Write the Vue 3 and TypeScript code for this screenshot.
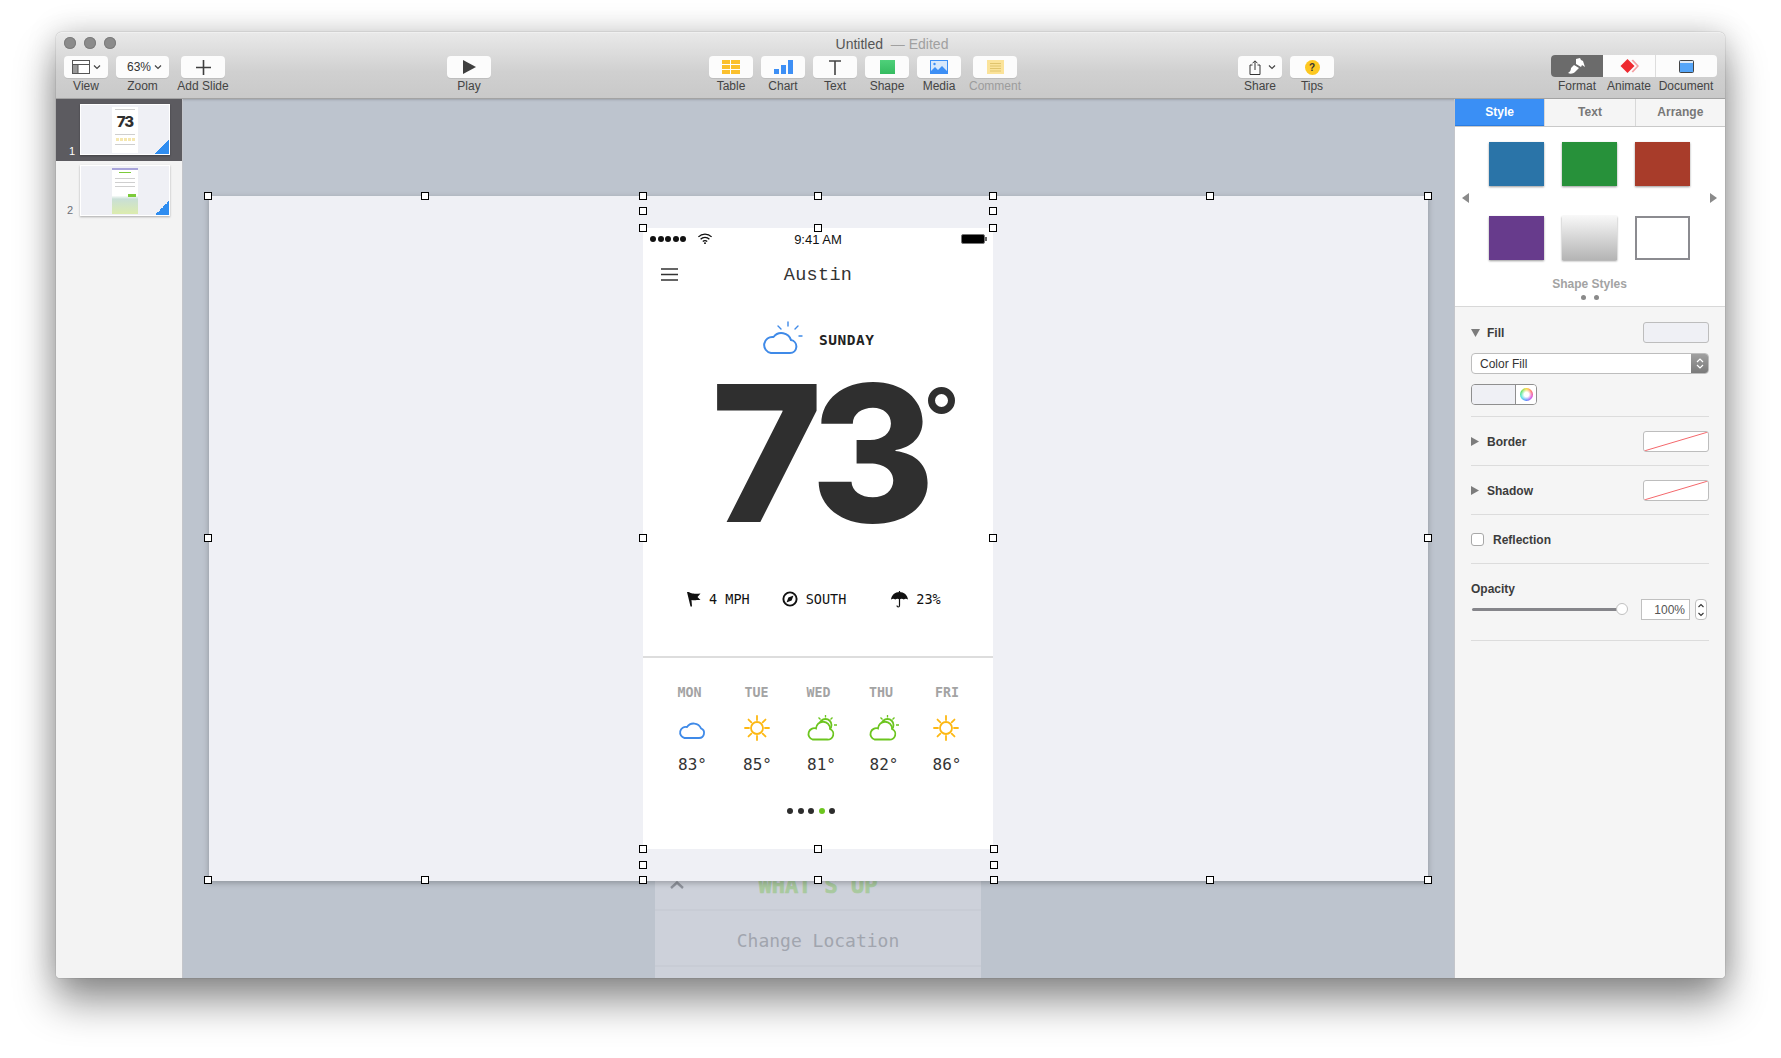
<script setup lang="ts">
type Tool = { label: string; icon: string; width: number; dim?: boolean };
type Day = { name: string; temp: string; icon: "cloud" | "sun" | "partly"; nudge: number; iconNudge: number };

const leftTools: Tool[] = [
  { label: "View", icon: "view", width: 44 },
  { label: "Zoom", icon: "zoom", width: 53 },
  { label: "Add Slide", icon: "add", width: 44 },
];
const insertTools: Tool[] = [
  { label: "Table", icon: "table", width: 44 },
  { label: "Chart", icon: "chart", width: 44 },
  { label: "Text", icon: "text", width: 44 },
  { label: "Shape", icon: "shape", width: 44 },
  { label: "Media", icon: "media", width: 44 },
  { label: "Comment", icon: "comment", width: 44, dim: true },
];
const shareTools: Tool[] = [
  { label: "Share", icon: "share", width: 44 },
  { label: "Tips", icon: "tips", width: 44 },
];

const swatches = ["blue", "green", "red", "purple", "silver", "outline"];

const days: Day[] = [
  { name: "MON", temp: "83°", icon: "cloud", nudge: -3, iconNudge: -1 },
  { name: "TUE", temp: "85°", icon: "sun", nudge: -1, iconNudge: -1 },
  { name: "WED", temp: "81°", icon: "partly", nudge: -3, iconNudge: 0 },
  { name: "THU", temp: "82°", icon: "partly", nudge: -3, iconNudge: 0 },
  { name: "FRI", temp: "86°", icon: "sun", nudge: 0, iconNudge: -1 },
];

// selection handles, x and y from the slide's top left handle
const handles: [number, number][] = [
  [0, 0], [217, 0], [435, 0], [610, 0], [785, 0], [1002, 0], [1220, 0],
  [435, 15], [785, 15], [435, 32], [610, 32], [785, 32],
  [0, 342], [435, 342], [785, 342], [1220, 342],
  [435, 653], [610, 653], [786, 653], [435, 669], [786, 669],
  [0, 684], [217, 684], [435, 684], [610, 684], [786, 684], [1002, 684], [1220, 684],
];

const sunRays = [0, 45, 90, 135, 180, 225, 270, 315];
</script>

<template>
  <div class="window">
    <header class="toolbar">
      <div class="titlebar">
        <div class="lights"><i></i><i></i><i></i></div>
        <div class="title">Untitled <span class="edited">&nbsp;— Edited</span></div>
      </div>
      <div class="tools">
        <div class="group left-group">
          <div v-for="t in leftTools" :key="t.label" class="tool">
            <div class="btn" :style="{ width: t.width + 'px' }">
              <template v-if="t.icon === 'view'">
                <svg width="18" height="14" viewBox="0 0 18 14"><rect x=".5" y=".5" width="17" height="13" fill="#fff" stroke="#555"/><rect x="1" y="5" width="5" height="8" fill="#999"/><path d="M1 4.500h16M6 5v8" stroke="#555" fill="none"/></svg>
                <svg class="chev" width="8" height="6" viewBox="0 0 8 6"><path d="M1 1.500l3 3 3-3" fill="none" stroke="#444" stroke-width="1.200"/></svg>
              </template>
              <template v-else-if="t.icon === 'zoom'">
                <span class="zoomval">63%</span>
                <svg class="chev" width="8" height="6" viewBox="0 0 8 6"><path d="M1 1.500l3 3 3-3" fill="none" stroke="#444" stroke-width="1.200"/></svg>
              </template>
              <svg v-else width="15" height="15" viewBox="0 0 15 15"><path d="M7.500 0v15M0 7.500h15" stroke="#3f3f3f" stroke-width="1.600"/></svg>
            </div>
            <span class="tool-label">{{ t.label }}</span>
          </div>
        </div>

        <div class="tool play">
          <div class="btn"><svg width="14" height="14" viewBox="0 0 14 14"><path d="M1 0l13 7-13 7z" fill="#3f3f3f"/></svg></div>
          <span class="tool-label">Play</span>
        </div>

        <div class="group insert-group">
          <div v-for="t in insertTools" :key="t.label" class="tool" :class="{ dim: t.dim }">
            <div class="btn">
              <svg v-if="t.icon === 'table'" width="18" height="14" viewBox="0 0 18 14"><rect width="18" height="14" fill="#fbc02d"/><path d="M0 4.500h18M0 9.500h18M8.500 0v14" stroke="#fff"/></svg>
              <svg v-else-if="t.icon === 'chart'" width="19" height="14" viewBox="0 0 19 14"><rect y="9" width="5" height="5" fill="#3d8ff5"/><rect x="7" y="5" width="5" height="9" fill="#3d8ff5"/><rect x="14" width="5" height="14" fill="#3d8ff5"/></svg>
              <svg v-else-if="t.icon === 'text'" width="12" height="15" viewBox="0 0 12 15"><path d="M0 1h12M6 1v14" stroke="#444" stroke-width="1.600" fill="none"/></svg>
              <svg v-else-if="t.icon === 'shape'" width="15" height="14" viewBox="0 0 15 14"><defs><linearGradient id="sh" x1="0" y1="0" x2="0" y2="1"><stop offset="0" stop-color="#4fd07a"/><stop offset="1" stop-color="#35bb60"/></linearGradient></defs><rect width="15" height="14" fill="url(#sh)"/></svg>
              <svg v-else-if="t.icon === 'media'" width="18" height="14" viewBox="0 0 18 14"><rect x=".5" y=".5" width="17" height="13" fill="#d8e8fb" stroke="#3d8ff5"/><circle cx="4.500" cy="4" r="1.200" fill="#3d8ff5"/><path d="M1 11l4-4 3 3 4-4 5 5v2H1z" fill="#3d8ff5"/></svg>
              <svg v-else width="17" height="14" viewBox="0 0 17 14"><rect width="17" height="14" fill="#fbe39a"/><path d="M3 3.500h11M3 6h11M3 8.500h11M3 11h11" stroke="#d9bc62" stroke-width=".8"/></svg>
            </div>
            <span class="tool-label">{{ t.label }}</span>
          </div>
        </div>

        <div class="group share-group">
          <div v-for="t in shareTools" :key="t.label" class="tool">
            <div class="btn">
              <template v-if="t.icon === 'share'">
                <svg class="share-icon" width="12" height="15" viewBox="0 0 12 15"><path d="M3.500 5H1v9.500h10V5H8.500M6 10V1M3.500 3.300L6 .8l2.500 2.500" fill="none" stroke="#333"/></svg>
                <svg class="chev wide" width="8" height="6" viewBox="0 0 8 6"><path d="M1 1.500l3 3 3-3" fill="none" stroke="#444" stroke-width="1.200"/></svg>
              </template>
              <span v-else class="tip">?</span>
            </div>
            <span class="tool-label">{{ t.label }}</span>
          </div>
        </div>

        <div class="inspector-group">
          <div class="seg">
            <div class="seg-btn active">
              <svg width="18" height="16" viewBox="0 0 18 16"><path d="M8 1l4-1 1 2 2 1 2 6-3-2-1 2-5-3zM6 7l5 3-4 4c-2 2-5 2-7 1 2-1 3-3 3-5z" fill="#fff"/></svg>
            </div>
            <div class="seg-btn">
              <svg width="19" height="14" viewBox="0 0 19 14"><path d="M11.500 1.500L17 7l-5.500 5.500 1.500 1L19 7l-6-6.500z" fill="#f4a0a2"/><path d="M7.500 0l7 7-7 7-7-7z" fill="#ee2a30"/></svg>
            </div>
            <div class="seg-btn">
              <svg width="15" height="13" viewBox="0 0 15 13"><rect x=".5" y=".5" width="14" height="12" rx="1" fill="#55a5f8" stroke="#444"/><rect x="1" y="1" width="13" height="2" fill="#dfe9f5"/></svg>
            </div>
          </div>
          <div class="seg-labels"><span>Format</span><span>Animate</span><span>Document</span></div>
        </div>
      </div>
    </header>

    <div class="body">
      <aside class="sidebar">
        <div class="thumb-row selected">
          <span class="num">1</span>
          <div class="thumb">
            <div class="mini-phone">
              <div class="mini-line top"></div>
              <b class="mini-73">73</b>
              <div class="mini-line first"></div>
              <div class="mini-colors"><i></i><i></i><i></i><i></i><i></i></div>
              <div class="mini-line"></div>
            </div>
            <i class="corner"></i>
          </div>
        </div>
        <div class="thumb-row">
          <span class="num">2</span>
          <div class="thumb">
            <div class="mini-phone second">
              <div class="mini-green"></div>
              <div class="mini-line first"></div>
              <div class="mini-line"></div>
              <div class="mini-line"></div>
              <div class="mini-btn"></div>
            </div>
            <i class="corner"></i>
          </div>
        </div>
      </aside>

      <main class="canvas">
        <div class="slide">
          <div class="phone">
            <div class="status">
              <div class="signal"><i></i><i></i><i></i><i></i><i></i></div>
              <svg class="wifi" width="16" height="11" viewBox="0 0 14 10"><path d="M1 3.500a8.500 8.500 0 0 1 12 0M3 5.700a5.600 5.600 0 0 1 8 0M5 7.800a2.800 2.800 0 0 1 4 0" fill="none" stroke="#111" stroke-width="1.200"/><circle cx="7" cy="9.200" r=".9" fill="#111"/></svg>
              <span class="clock">9:41 AM</span>
              <div class="battery"><i></i></div>
            </div>
            <div class="nav">
              <svg class="menu" width="17" height="13" viewBox="0 0 17 13"><path d="M0 1h17M0 6.500h17M0 12h17" stroke="#333" stroke-width="1.500"/></svg>
              <span class="city">Austin</span>
            </div>
            <div class="today">
              <svg width="40" height="33" viewBox="0 0 40 33" fill="none" stroke="#3f8ae8" stroke-width="2" stroke-linecap="round" stroke-linejoin="round">
                <path d="M8 32h19a6.500 6.500 0 0 0 1-12.900A10 10 0 0 0 10.500 16 8 8 0 0 0 8 32z"/>
                <path d="M25 1v4M15 5l3 3M35 5l-3 3M36 15h3" stroke-width="1.400"/>
              </svg>
              <span class="day-name">SUNDAY</span>
            </div>
            <div class="hero">
              <span class="big">73</span>
              <i class="ring"></i>
            </div>
            <div class="stats">
              <div class="stat wind">
                <svg width="14" height="16" viewBox="0 0 14 16"><path d="M0 1l1.500 0c3 1.200 4 2.200 12 1.500l-3 3.500 3 3c-4.500 0-6 .5-9 0L5 15.500 3.500 15.500z" fill="#111"/></svg>
                <span>4 MPH</span>
              </div>
              <div class="stat dir">
                <svg width="16" height="16" viewBox="0 0 15 15"><circle cx="7.500" cy="7.500" r="6.200" fill="none" stroke="#111" stroke-width="1.800"/><path d="M10.800 4.200L9 9 4.200 10.800 6 6z" fill="#111"/></svg>
                <span>SOUTH</span>
              </div>
              <div class="stat rain">
                <svg width="17" height="17" viewBox="0 0 17 17"><path d="M0 8.500C.5 4 4 1 8.500 1S16.500 4 17 8.500c-1.500-1-3-1-4.200 0-1.300-1-3-1-4.300 0-1.300-1-3-1-4.300 0C3 7.500 1.500 7.500 0 8.500z" fill="#111"/><path d="M8.500 0v1M8.500 8v6.500c0 2-2.500 2-2.500 0" fill="none" stroke="#111" stroke-width="1.200"/></svg>
                <span>23%</span>
              </div>
            </div>
            <div class="forecast">
              <div v-for="d in days" :key="d.name" class="fday">
                <span class="fname" :style="{ transform: `translateX(${d.nudge}px)` }">{{ d.name }}</span>
                <div class="ficon" :style="{ transform: `translateX(${d.iconNudge}px)` }">
                  <svg v-if="d.icon === 'cloud'" width="30" height="26" viewBox="0 0 30 26" fill="none" stroke="#3f8ae8" stroke-width="1.800">
                    <path d="M7.500 23H22a5 5 0 0 0 2-9.600A8 8 0 0 0 10 12a5.500 5.500 0 0 0-2.500 11z" />
                  </svg>
                  <svg v-else-if="d.icon === 'sun'" width="26" height="26" viewBox="0 0 26 26" fill="none" stroke="#fdb813" stroke-width="1.800">
                    <circle cx="13" cy="13" r="6" />
                    <path v-for="r in sunRays" :key="r" d="M13 1v4" :transform="`rotate(${r} 13 13)`" stroke-linecap="round" />
                  </svg>
                  <svg v-else width="32" height="26" viewBox="0 0 32 26" fill="none" stroke="#6cc51f" stroke-width="1.800">
                    <circle cx="19.500" cy="10" r="6" />
                    <path d="M19.500 0v2.500M12.500 2.500l2 2M26.500 2.500l-2 2M28 10h3" stroke-width="1.300" />
                    <path d="M6.500 24.500H21a5.500 5.500 0 0 0 3-10.500 7 7 0 0 0-14-.5 5.500 5.500 0 0 0-3.500 11z" fill="#fff" />
                  </svg>
                </div>
                <span class="ftemp">{{ d.temp }}</span>
              </div>
            </div>
            <div class="pager"><i></i><i></i><i></i><i class="on"></i><i></i></div>
          </div>
          <i
            v-for="(h, idx) in handles"
            :key="idx"
            class="handle"
            :style="{ left: h[0] - 5 + 'px', top: h[1] - 4 + 'px' }"
          ></i>
        </div>

        <div class="sheet">
          <div class="sheet-head">
            <svg class="caret" width="14" height="8" viewBox="0 0 14 8"><path d="M1 7l6-5.500L13 7" fill="none" stroke="#8e929b" stroke-width="2.400"/></svg>
            <span class="whats">WHAT'S UP</span>
          </div>
          <div class="sheet-row">Change Location</div>
          <div class="sheet-row"></div>
        </div>
      </main>

      <aside class="panel">
        <div class="tabs">
          <div class="tab on">Style</div>
          <div class="tab">Text</div>
          <div class="tab">Arrange</div>
        </div>
        <section class="styles">
          <svg class="arrow" width="7" height="10" viewBox="0 0 7 10"><path d="M7 0v10L0 5z" fill="#8a8a8a"/></svg>
          <div class="swatches">
            <div v-for="s in swatches" :key="s" class="swatch" :class="s"></div>
          </div>
          <svg class="arrow" width="7" height="10" viewBox="0 0 7 10"><path d="M0 0v10l7-5z" fill="#8a8a8a"/></svg>
          <div class="styles-label">Shape Styles</div>
          <div class="styles-dots"><i></i><i></i></div>
        </section>

        <section class="props">
          <div class="prop fill">
            <div class="prop-row">
              <svg class="tri" width="9" height="8" viewBox="0 0 9 8"><path d="M0 0h9L4.500 8z" fill="#7c7c7c"/></svg>
              <span class="prop-name">Fill</span>
              <div class="well tint"></div>
            </div>
            <div class="select">
              <span>Color Fill</span>
              <div class="select-cap">
                <svg width="8" height="13" viewBox="0 0 8 13"><path d="M1 5l3-3 3 3M1 8l3 3 3-3" fill="none" stroke="#fff" stroke-width="1.200"/></svg>
              </div>
            </div>
            <div class="colorpick">
              <div class="colorpick-well"></div>
              <div class="colorpick-wheel"><i></i></div>
            </div>
          </div>
          <div class="prop row">
            <svg class="tri" width="8" height="9" viewBox="0 0 8 9"><path d="M0 0v9l8-4.500z" fill="#7c7c7c"/></svg>
            <span class="prop-name">Border</span>
            <div class="well none"><svg width="64" height="19" viewBox="0 0 64 19"><path d="M0 19L64 0" stroke="#f4686c" stroke-width="1"/></svg></div>
          </div>
          <div class="prop row">
            <svg class="tri" width="8" height="9" viewBox="0 0 8 9"><path d="M0 0v9l8-4.500z" fill="#7c7c7c"/></svg>
            <span class="prop-name">Shadow</span>
            <div class="well none"><svg width="64" height="19" viewBox="0 0 64 19"><path d="M0 19L64 0" stroke="#f4686c" stroke-width="1"/></svg></div>
          </div>
          <div class="prop row">
            <i class="check"></i>
            <span class="prop-name refl">Reflection</span>
          </div>
          <div class="prop opacity">
            <div class="prop-name">Opacity</div>
            <div class="opacity-row">
              <div class="slider"><i></i></div>
              <div class="pct">100%</div>
              <div class="stepper">
                <svg width="8" height="16" viewBox="0 0 8 16"><path d="M1.500 5L4 2.500 6.500 5M1.500 11L4 13.500 6.500 11" fill="none" stroke="#333" stroke-width="1.100"/></svg>
              </div>
            </div>
          </div>
        </section>
      </aside>
    </div>
  </div>
</template>

<style>
html,
body {
  margin: 0;
  background: #fff;
}
</style>

<style scoped>
.window {
  position: absolute;
  left: 56px;
  top: 32px;
  width: 1669px;
  height: 946px;
  border-radius: 6px 6px 4px 4px;
  display: flex;
  flex-direction: column;
  font-family: "Liberation Sans", Arial, sans-serif;
  box-shadow: 0 24px 40px rgba(0, 0, 0, 0.42), 0 0 1px rgba(0, 0, 0, 0.6), 0 0 30px rgba(0, 0, 0, 0.18);
}
i {
  display: block;
}

/* toolbar */
.toolbar {
  height: 67px;
  flex: none;
  background: linear-gradient(#e9e9e9, #d0d0d0 60%, #c9c9c9);
  border-top: 1px solid #f0f0f0;
  border-radius: 6px 6px 0 0;
  border-bottom: 1px solid #a3a3a3;
  box-sizing: border-box;
}
.titlebar {
  height: 23px;
  position: relative;
  display: flex;
  justify-content: center;
  align-items: center;
}
.lights {
  position: absolute;
  left: 8px;
  top: 4px;
  display: flex;
  gap: 8px;
}
.lights i {
  width: 12px;
  height: 12px;
  border-radius: 50%;
  background: #8b8b8b;
  box-shadow: inset 0 0 0 1px #7d7d7d;
}
.title {
  font-size: 14px;
  color: #555;
  margin: -2px 0 0 3px;
}
.edited {
  color: #a0a0a0;
}
.tools {
  display: flex;
  padding-left: 8px;
}
.group {
  display: flex;
}
.left-group {
  gap: 8px;
}
.left-group .tool:last-child {
  margin-left: 4px;
}
.tool {
  display: flex;
  flex-direction: column;
  align-items: center;
  width: 44px;
}
.left-group .tool:nth-child(2) {
  width: 53px;
}
.btn {
  width: 44px;
  height: 22px;
  background: #fcfcfc;
  border-radius: 4px;
  display: flex;
  align-items: center;
  justify-content: center;
  box-shadow: 0 1px 0 rgba(0, 0, 0, 0.08);
}
.chev {
  margin-left: 3px;
}
.chev.wide {
  margin-left: 7px;
}
.share-icon {
  margin-left: 4px;
}
.zoomval {
  font-size: 12px;
  color: #333;
  margin-left: 4px;
}
.tip {
  width: 15px;
  height: 15px;
  border-radius: 50%;
  background: #fdc821;
  color: #333;
  font-size: 10px;
  font-weight: 700;
  line-height: 15px;
  text-align: center;
}
.tool-label {
  font-size: 12px;
  line-height: 13px;
  margin-top: 2px;
  color: #444;
  white-space: nowrap;
}
.dim .tool-label {
  color: #9c9c9c;
}
.play {
  margin-left: 222px;
}
.insert-group {
  margin-left: 218px;
  gap: 8px;
}
.insert-group .tool:last-child {
  margin-left: 4px;
}
.share-group {
  margin-left: 221px;
  gap: 8px;
}
.inspector-group {
  margin-left: 217px;
  margin-top: -1px;
}
.seg {
  display: flex;
  height: 22px;
  border-radius: 4px;
  overflow: hidden;
  background: #fcfcfc;
}
.seg-btn {
  width: 52px;
  display: flex;
  align-items: center;
  justify-content: center;
  box-sizing: border-box;
}
.seg-btn:last-child {
  width: 62px;
  border-left: 1px solid #ddd;
}
.seg-btn.active {
  background: #6b6b6b;
}
.seg-labels {
  display: flex;
  font-size: 12px;
  line-height: 13px;
  margin-top: 3px;
  color: #444;
}
.seg-labels span {
  width: 52px;
  text-align: center;
}
.seg-labels span:last-child {
  width: 62px;
}

/* layout */
.body {
  flex: 1;
  display: flex;
  min-height: 0;
  border-radius: 0 0 4px 4px;
  overflow: hidden;
}
.sidebar {
  width: 127px;
  flex: none;
  background: #f3f3f3;
  border-right: 1px solid #c4c6cb;
  box-sizing: border-box;
}
.thumb-row {
  height: 62px;
  position: relative;
  box-sizing: border-box;
  padding: 5px 0 0 24px;
}
.thumb-row + .thumb-row {
  padding-top: 4px;
}
.thumb-row.selected {
  background: #5c5b60;
}
.num {
  position: absolute;
  left: 13px;
  bottom: 4px;
  font-size: 11px;
  color: #6d7078;
}
.selected .num {
  color: #fff;
}
.thumb-row + .thumb-row .num {
  bottom: 7px;
  left: 11px;
}
.thumb {
  width: 90px;
  height: 51px;
  background: #eff0f5;
  border: 1px solid #fff;
  box-sizing: border-box;
  position: relative;
  overflow: hidden;
  box-shadow: 0 1px 2px rgba(0, 0, 0, 0.3);
}
.corner {
  position: absolute;
  right: 0;
  bottom: 0;
  width: 14px;
  height: 14px;
  background: linear-gradient(135deg, transparent 50%, #2f8df0 50%);
}
.mini-phone {
  width: 26px;
  height: 46px;
  margin: 2px auto 0;
  background: #fff;
  display: flex;
  flex-direction: column;
  align-items: center;
  overflow: hidden;
}
.mini-phone.second {
  background: linear-gradient(#fff 58%, #c9dfd6 66%, #dcecae);
  border-top: 2px solid #a8a4da;
  box-sizing: border-box;
}
.mini-73 {
  font: 800 15px/14px Inter, sans-serif;
  letter-spacing: -1px;
  color: #2f2f2f;
  margin-top: 5px;
}
.mini-line {
  width: 20px;
  height: 1px;
  background: #cfcfcf;
  margin-top: 3px;
}
.mini-line.top {
  margin-top: 2px;
}
.mini-line.first {
  margin-top: 5px;
}
.mini-colors {
  display: flex;
  gap: 1px;
  margin-top: 3px;
}
.mini-colors i {
  width: 3px;
  height: 3px;
  background: #f5e7b0;
}
.mini-green {
  width: 12px;
  height: 1px;
  background: #7ccb3a;
  margin-top: 2px;
}
.mini-btn {
  width: 8px;
  height: 3px;
  background: #7ccb3a;
  margin: 7px 0 0 14px;
}

/* canvas */
.canvas {
  flex: 1;
  background: #bdc4ce;
  padding-top: 97px;
  padding-left: 26px;
  overflow: hidden;
  box-sizing: border-box;
  box-shadow: inset 0 3px 3px -3px rgba(0, 0, 0, 0.35);
}
.slide {
  position: relative;
  z-index: 1;
  width: 1219px;
  height: 685px;
  background: #eff0f5;
  box-shadow: 0 2px 6px rgba(0, 0, 0, 0.25);
  padding: 32px 0 0 434px;
  box-sizing: border-box;
}
.handle {
  position: absolute;
  width: 8px;
  height: 8px;
  background: #fff;
  border: 1px solid #000;
  box-sizing: border-box;
}
.sheet {
  width: 326px;
  margin: -20px 0 0 446px;
  background: #cdd1da;
  position: relative;
}
.sheet-head {
  height: 48px;
  border-bottom: 2px solid #c8ccd5;
  position: relative;
  display: flex;
  justify-content: center;
  align-items: center;
}
.caret {
  position: absolute;
  left: 15px;
  top: 20px;
}
.whats {
  font-family: "DejaVu Sans Mono", monospace;
  font-weight: 700;
  font-size: 22px;
  color: #a9c99f;
  margin-top: 1px;
  -webkit-text-stroke: 0.7px #a9c99f;
}
.sheet-row {
  height: 54px;
  border-bottom: 2px solid #c8ccd5;
  text-align: center;
  font: 18px/60px "DejaVu Sans Mono", monospace;
  color: #a1a5ae;
}

/* phone */
.phone {
  width: 350px;
  height: 621px;
  background: #fff;
  display: flex;
  flex-direction: column;
  position: relative;
}
.status {
  height: 22px;
  position: relative;
  display: flex;
  align-items: center;
  justify-content: center;
}
.signal {
  position: absolute;
  left: 7px;
  top: 8px;
  display: flex;
  gap: 1.500px;
}
.signal i {
  width: 6px;
  height: 6px;
  border-radius: 50%;
  background: #111;
}
.wifi {
  position: absolute;
  left: 54px;
  top: 5px;
}
.clock {
  font-size: 13px;
  color: #111;
}
.battery {
  position: absolute;
  right: 8px;
  top: 6px;
  width: 24px;
  height: 10px;
  background: #000;
  border: 1px solid #777;
  box-sizing: border-box;
  border-radius: 2px;
}
.battery i {
  position: absolute;
  right: -3px;
  top: 2px;
  width: 2px;
  height: 4px;
  background: #666;
}
.nav {
  height: 48px;
  position: relative;
  display: flex;
  align-items: center;
  justify-content: center;
}
.menu {
  position: absolute;
  left: 18px;
  top: 18px;
}
.city {
  font: 18.500px "Liberation Mono", monospace;
  letter-spacing: 0.3px;
  color: #333;
  margin-top: 2px;
}
.today {
  display: flex;
  align-items: center;
  height: 34px;
  padding-left: 120px;
  margin-top: 22px;
  gap: 16px;
}
.day-name {
  font: 700 14.500px "DejaVu Sans Mono", monospace;
  color: #222;
  margin-top: 6px;
  letter-spacing: 0.5px;
}
.hero {
  height: 170px;
  display: flex;
  padding-left: 68px;
  position: relative;
  margin-top: 14px;
}
.big {
  font: 800 190px/170px Inter, sans-serif;
  letter-spacing: -9px;
  color: #2f2f2f;
}
.ring {
  position: absolute;
  left: 285px;
  top: 19px;
  width: 27px;
  height: 27px;
  border: 7px solid #2f2f2f;
  border-radius: 50%;
  box-sizing: border-box;
}
.stats {
  height: 30px;
  margin-top: 46px;
  display: flex;
  align-items: center;
  font: 13.500px "DejaVu Sans Mono", monospace;
  color: #111;
}
.stat {
  display: flex;
  align-items: center;
  gap: 8px;
}
.wind {
  margin-left: 44px;
}
.dir {
  margin-left: 32px;
}
.rain {
  margin-left: 45px;
}
.forecast {
  margin-top: 42px;
  border-top: 2px solid #dddddd;
  padding: 25px 0 0 17px;
  display: grid;
  grid-template-columns: 65px 65px 63px 62px 64px;
}
.fday {
  display: flex;
  flex-direction: column;
  align-items: center;
}
.fname {
  font: 700 13.300px/20px "DejaVu Sans Mono", monospace;
  color: #a3a3a3;
}
.ficon {
  height: 26px;
  margin-top: 12px;
}
.ftemp {
  font: 16px/22px "DejaVu Sans Mono", monospace;
  color: #333;
  margin-top: 13px;
}
.pager {
  display: flex;
  gap: 4.500px;
  justify-content: center;
  margin: 32px 0 0 -14px;
}
.pager i {
  width: 6px;
  height: 6px;
  border-radius: 50%;
  background: #2d2d2d;
}
.pager .on {
  background: #6cc51f;
}

/* inspector */
.panel {
  width: 271px;
  flex: none;
  background: #f5f5f5;
  border-left: 1px solid #c4c6cb;
  box-sizing: border-box;
  font-size: 11px;
}
.tabs {
  display: flex;
  height: 28px;
  background: #f5f5f5;
  border-bottom: 1px solid #c9c9c9;
  box-sizing: border-box;
}
.tab {
  flex: 1;
  text-align: center;
  font-weight: 700;
  line-height: 27px;
  font-size: 12px;
  color: #787878;
  border-left: 1px solid #d8d8d8;
}
.tab.on {
  background: #3a8ff5;
  color: #fff;
  border-left: 0;
  border-bottom: 1px solid #2b7ce0;
}
.styles {
  height: 180px;
  background: #fff;
  border-bottom: 1px solid #d8d8d8;
  box-sizing: border-box;
  display: grid;
  grid-template-columns: 7px 1fr 7px;
  align-items: center;
  padding: 13px 8px 0 7px;
}
.arrow {
  margin-bottom: 6px;
}
.swatches {
  display: grid;
  grid-template-columns: repeat(3, 55px);
  gap: 30px 18px;
  justify-content: center;
}
.swatch {
  height: 44px;
  box-shadow: 0 1px 2px rgba(0, 0, 0, 0.4);
}
.blue {
  background: #2a74a8;
}
.green {
  background: #27913a;
}
.red {
  background: #a83c2a;
}
.purple {
  background: #673b8c;
}
.silver {
  background: linear-gradient(#f7f7f7, #b4b4b4);
}
.outline {
  background: #fff;
  border: 2px solid #8b8b90;
  box-sizing: border-box;
  box-shadow: none;
}
.styles-label {
  grid-column: 1 / 4;
  text-align: center;
  font-size: 12px;
  font-weight: 700;
  color: #a3a3a3;
  margin-top: 14px;
  height: 15px;
}
.styles-dots {
  grid-column: 1 / 4;
  display: flex;
  justify-content: center;
  gap: 8px;
  height: 10px;
}
.styles-dots i {
  width: 5px;
  height: 5px;
  background: #8a8a8a;
  border-radius: 50%;
}
.props {
  padding: 0 16px;
}
.prop {
  border-bottom: 1px solid #dcdcdc;
  height: 49px;
  box-sizing: border-box;
}
.prop-name {
  font-size: 12px;
  font-weight: 700;
  color: #3c3c3c;
}
.fill {
  height: 110px;
  padding-top: 15px;
}
.prop-row {
  display: flex;
  align-items: center;
}
.prop .tri {
  flex: none;
  margin-right: 7px;
}
.prop.row {
  display: flex;
  align-items: center;
  padding-top: 1px;
}
.prop.row .tri {
  margin-right: 8px;
}
.well {
  margin-left: auto;
  width: 66px;
  height: 21px;
  border: 1px solid #bdbdbd;
  border-radius: 3px;
  box-sizing: border-box;
  overflow: hidden;
}
.tint {
  background: #eff0f5;
}
.none {
  background: #fff;
}
.none svg {
  display: block;
}
.select {
  margin-top: 10px;
  height: 21px;
  background: #fff;
  border: 1px solid #bdbdbd;
  border-radius: 4px;
  box-sizing: border-box;
  display: flex;
  align-items: center;
  padding-left: 8px;
  font-size: 12px;
  color: #333;
  position: relative;
  overflow: hidden;
}
.select-cap {
  position: absolute;
  right: 0;
  top: 0;
  bottom: 0;
  width: 17px;
  background: linear-gradient(#a0a0a0, #7a7a7a);
  display: flex;
  align-items: center;
  justify-content: center;
}
.colorpick {
  margin-top: 10px;
  width: 66px;
  height: 21px;
  display: flex;
  border: 1px solid #8f8f8f;
  border-radius: 4px;
  box-sizing: border-box;
  overflow: hidden;
}
.colorpick-well {
  flex: 1;
  background: #eff0f5;
  border-right: 1px solid #8f8f8f;
}
.colorpick-wheel {
  width: 20px;
  background: #fff;
  display: flex;
  align-items: center;
  justify-content: center;
}
.colorpick-wheel i {
  width: 13px;
  height: 13px;
  border-radius: 50%;
  background: radial-gradient(#fff 25%, transparent 70%),
    conic-gradient(#f9d423, #ff5e62, #d63ae0, #4f7cff, #3ee0e0, #46e05a, #f9d423);
}
.check {
  width: 13px;
  height: 13px;
  border: 1px solid #a8a8a8;
  border-radius: 3px;
  background: #fff;
  box-sizing: border-box;
  margin-right: 9px;
}
.opacity {
  height: 77px;
  padding-top: 18px;
}
.opacity-row {
  display: flex;
  align-items: center;
  margin-top: 3px;
}
.slider {
  width: 150px;
  height: 3px;
  background: #85858a;
  border-radius: 2px;
  margin-left: 1px;
  position: relative;
}
.slider i {
  position: absolute;
  right: -6px;
  top: -5px;
  width: 12px;
  height: 12px;
  border-radius: 50%;
  background: #fff;
  border: 1px solid #c0c0c0;
  box-sizing: border-box;
}
.pct {
  width: 49px;
  height: 21px;
  margin-left: 19px;
  background: #fff;
  border: 1px solid #c0c0c0;
  box-sizing: border-box;
  font-size: 12px;
  line-height: 20px;
  text-align: right;
  padding-right: 4px;
  color: #555;
}
.stepper {
  width: 12px;
  height: 21px;
  margin-left: 5px;
  background: #fff;
  border: 1px solid #c0c0c0;
  border-radius: 4px;
  box-sizing: border-box;
  display: flex;
  align-items: center;
  justify-content: center;
}
</style>
